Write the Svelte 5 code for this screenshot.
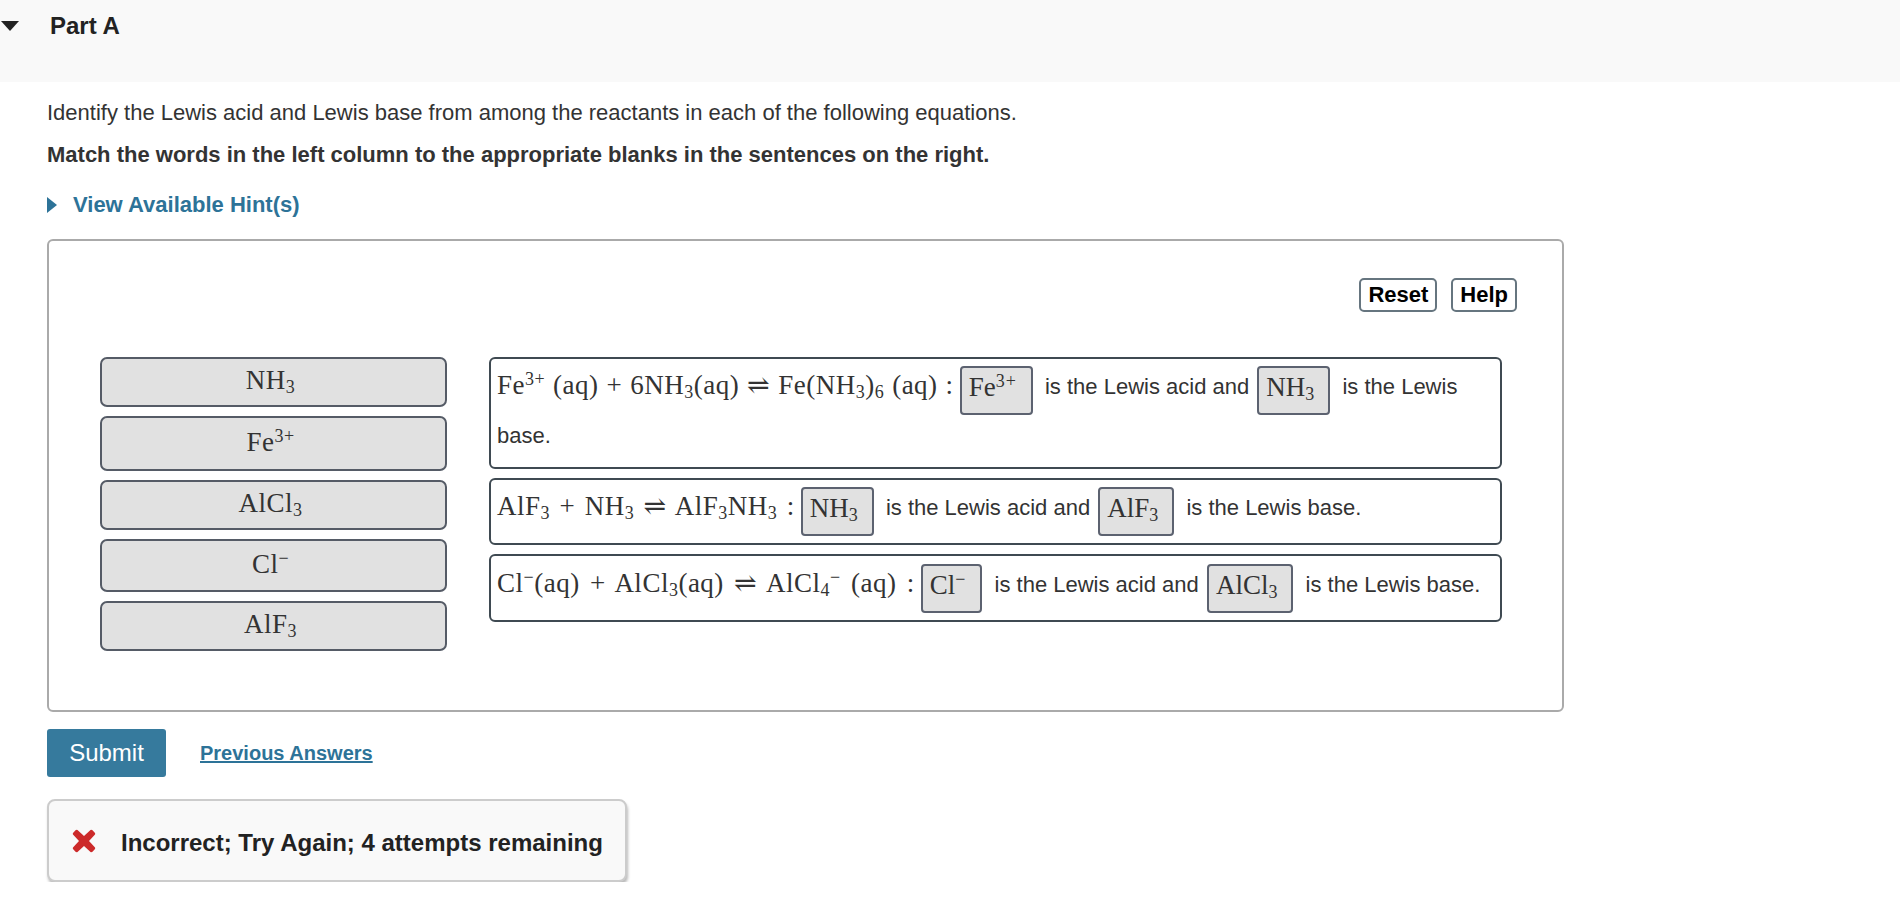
<script>
	const items = [
		{ base: "NH", sub: "3", cls: "" },
		{ base: "Fe", sup: "3+", cls: "tall" },
		{ base: "AlCl", sub: "3", cls: "" },
		{ base: "Cl", sup: "−", cls: "mid" },
		{ base: "AlF", sub: "3", cls: "" }
	];
</script>

<div class="part-head">
	<span class="caret"></span>
	<h2>Part A</h2>
</div>

<div class="content">
	<p class="intro">Identify the Lewis acid and Lewis base from among the reactants in each of the following equations.</p>
	<p class="instr">Match the words in the left column to the appropriate blanks in the sentences on the right.</p>
	<div class="hint"><span class="hint-caret"></span><span>View Available Hint(s)</span></div>

	<div class="board">
		<div class="tools">
			<button class="tool">Reset</button>
			<button class="tool">Help</button>
		</div>
		<div class="columns">
			<div class="bank">
				{#each items as it}
					<div class="item {it.cls}">
						<span class="m">{it.base}{#if it.sub}<sub>{it.sub}</sub>{/if}{#if it.sup}<sup>{it.sup}</sup>{/if}</span>
					</div>
				{/each}
			</div>
			<div class="sentences">
				<div class="row wrapped">
					<span class="m eq tight">Fe<sup>3+</sup> (aq) + 6NH<sub>3</sub>(aq) ⇌ Fe(NH<sub>3</sub>)<sub>6</sub> (aq) :</span>
					<span class="chip"><span class="m">Fe<sup>3+</sup></span></span>
					<span class="t">is the Lewis acid and</span>
					<span class="chip"><span class="m">NH<sub>3</sub></span></span>
					<span class="t">is the Lewis base.</span>
				</div>
				<div class="row">
					<span class="m eq">AlF<sub>3</sub> + NH<sub>3</sub> ⇌ AlF<sub>3</sub>NH<sub>3</sub> :</span>
					<span class="chip"><span class="m">NH<sub>3</sub></span></span>
					<span class="t">is the Lewis acid and</span>
					<span class="chip"><span class="m">AlF<sub>3</sub></span></span>
					<span class="t">is the Lewis base.</span>
				</div>
				<div class="row">
					<span class="m eq wide">Cl<sup>−</sup>(aq) + AlCl<sub>3</sub>(aq) ⇌ AlCl<sub>4</sub><sup>−</sup> (aq) :</span>
					<span class="chip"><span class="m">Cl<sup>−</sup></span></span>
					<span class="t">is the Lewis acid and</span>
					<span class="chip"><span class="m">AlCl<sub>3</sub></span></span>
					<span class="t">is the Lewis base.</span>
				</div>
			</div>
		</div>
	</div>

	<div class="actions">
		<button class="submit">Submit</button>
		<a class="prev" href="#prev">Previous Answers</a>
	</div>

	<div class="feedback">
		<svg class="x" viewBox="0 0 24 24" width="24" height="24" aria-hidden="true">
			<path d="M5.5 1 L12 7 L18.5 1 Q19.5 .4 20.5 1.2 L23 4 Q23.6 5 22.8 5.8 L17 12 L22.8 18.2 Q23.6 19 23 20 L20.5 22.8 Q19.5 23.6 18.5 23 L12 17 L5.5 23 Q4.5 23.6 3.5 22.8 L1 20 Q.4 19 1.2 18.2 L7 12 L1.2 5.8 Q.4 5 1 4 L3.5 1.2 Q4.5 .4 5.5 1 Z" fill="#cc2a2a"/>
		</svg>
		<span class="fb-text">Incorrect; Try Again; 4 attempts remaining</span>
	</div>
</div>

<style>
	:global(body) {
		margin: 0;
		background: #fff;
		font-family: "Liberation Sans", Arial, sans-serif;
		color: #333;
	}

	.part-head {
		height: 82px;
		background: #f9f9f9;
		display: flex;
		align-items: flex-start;
		padding-top: 10px;
		box-sizing: border-box;
	}

	.caret {
		width: 0;
		height: 0;
		margin: 11px 0 0 1px;
		border-left: 9px solid transparent;
		border-right: 9px solid transparent;
		border-top: 10px solid #222;
	}

	h2 {
		margin: 0 0 0 31px;
		font-size: 24px;
		line-height: 32px;
		color: #222;
	}

	.content {
		padding-left: 47px;
		width: 1517px;
	}

	.intro,
	.instr {
		margin: 0;
		font-size: 22px;
		line-height: 30px;
	}

	.intro {
		margin-top: 16px;
	}

	.instr {
		margin-top: 12px;
		font-weight: bold;
	}

	.hint {
		margin-top: 20px;
		height: 30px;
		display: flex;
		align-items: center;
		color: #2d7398;
		font-weight: bold;
		font-size: 22px;
	}

	.hint-caret {
		width: 0;
		height: 0;
		border-top: 8px solid transparent;
		border-bottom: 8px solid transparent;
		border-left: 10px solid #2d7398;
		margin-right: 16px;
	}

	.board {
		margin-top: 19px;
		border: 2px solid #aaa;
		border-radius: 6px;
		box-sizing: border-box;
		padding: 37px 45px 59px 51px;
	}

	.tools {
		display: flex;
		justify-content: flex-end;
		gap: 14px;
	}

	.tool {
		height: 34px;
		padding: 0 7px;
		background: #fff;
		border: 2px solid #66757f;
		border-radius: 5px;
		font: bold 22px "Liberation Sans", Arial, sans-serif;
		color: #000;
	}

	.columns {
		display: flex;
		gap: 42px;
		margin-top: 45px;
	}

	.bank {
		width: 347px;
		flex: none;
		display: flex;
		flex-direction: column;
		gap: 9px;
	}

	.item {
		height: 50px;
		box-sizing: border-box;
		border: 2px solid #555b66;
		border-radius: 7px;
		background: #e1e1e1;
		display: flex;
		align-items: center;
		justify-content: center;
		padding: 0 6px 4px 0;
	}

	.item.tall {
		height: 55px;
	}

	.item.mid {
		height: 53px;
	}

	.m {
		font-family: "Liberation Serif", "DejaVu Serif", serif;
		font-size: 27px;
		color: #333;
		white-space: nowrap;
		letter-spacing: 0.5px;
		line-height: 38px;
	}

	.eq {
		word-spacing: 2.2px;
	}

	.eq.tight {
		word-spacing: 0.7px;
	}

	.eq.wide {
		word-spacing: 3px;
	}

	sub,
	sup {
		font-size: 18px;
		line-height: 0;
	}

	sub {
		vertical-align: -4px;
	}

	sup {
		vertical-align: 9px;
	}

	.sentences {
		width: 1013px;
		display: flex;
		flex-direction: column;
		gap: 9px;
	}

	.row {
		box-sizing: border-box;
		border: 2px solid #3f4a52;
		border-radius: 6px;
		padding: 7px 6px;
		font-size: 22px;
		line-height: 41px;
	}

	.row.wrapped {
		padding-bottom: 11px;
	}

	.row:last-child {
		padding-top: 8px;
	}

	.t {
		margin: 0 2px 0 6px;
	}

	.chip {
		display: inline-block;
		height: 49px;
		box-sizing: border-box;
		border: 2px solid #5c6270;
		border-radius: 4px;
		background: #e1e1e1;
		padding: 0 14px 0 7px;
		vertical-align: -2px;
		line-height: 38px;
	}

	.chip .m {
		letter-spacing: 0;
	}

	.chip sup {
		letter-spacing: 1px;
	}

	.actions {
		margin-top: 17px;
		display: flex;
		align-items: center;
		gap: 34px;
	}

	.submit {
		width: 119px;
		height: 48px;
		border: 0;
		border-radius: 3px;
		background: #367a9d;
		color: #fff;
		font: 24px "Liberation Sans", Arial, sans-serif;
	}

	.prev {
		color: #2d7398;
		font-weight: bold;
		font-size: 20px;
		text-decoration: underline;
	}

	.feedback {
		margin-top: 22px;
		width: 580px;
		height: 83px;
		box-sizing: border-box;
		display: flex;
		align-items: center;
		gap: 25px;
		padding-left: 23px;
		background: #f9f9f9;
		border: 2px solid #ccc;
		border-radius: 8px;
		box-shadow: 1px 3px 3px #bbb;
		font-weight: bold;
		font-size: 24px;
		color: #222;
	}

	.fb-text {
		margin-top: 4px;
	}
</style>
